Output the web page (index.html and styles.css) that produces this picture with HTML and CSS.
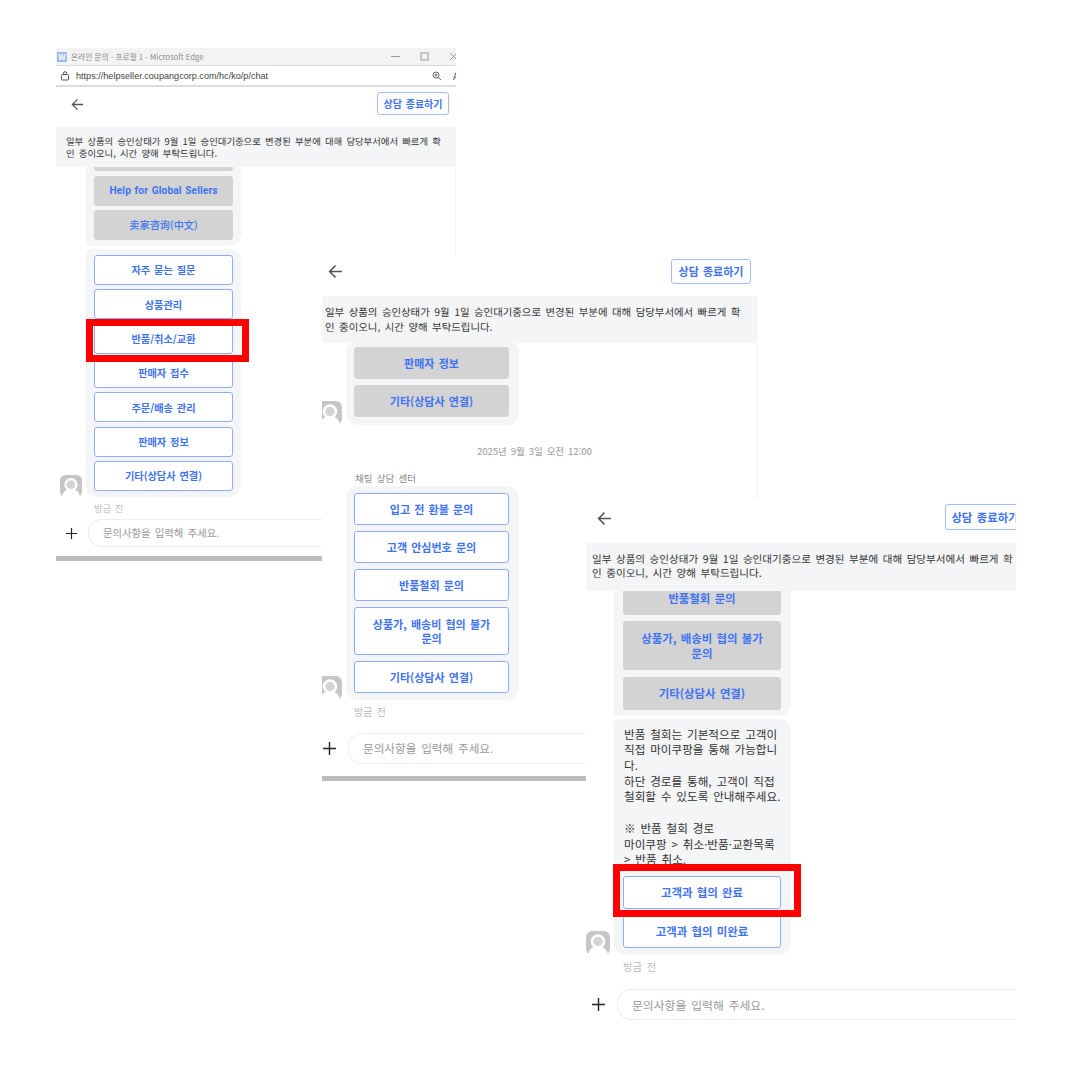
FILE: index.html
```html
<!DOCTYPE html>
<html lang="ko">
<head>
    <meta charset="UTF-8">
    <title>온라인 문의</title>
    <link rel="stylesheet" href="styles.css">
</head>
<body>
    <div class="canvas">

        <!-- First window: main menu -->
        <div class="window window-a">
            <div class="chrome">
                <div class="title-bar">
                    <span class="app-icon">W</span>
                    <span class="title-text">온라인 문의 - 프로필 1 - Microsoft Edge</span>
                    <span class="win-controls">
                        <svg width="9" height="9" viewBox="0 0 9 9"><path d="M0 4.5h9" stroke="#999" fill="none"/></svg>
                        <svg width="9" height="9" viewBox="0 0 9 9"><rect x="1" y="1" width="7" height="7" stroke="#999" fill="none"/></svg>
                        <svg width="9" height="9" viewBox="0 0 9 9"><path d="M1 1l7 7M8 1L1 8" stroke="#999" fill="none"/></svg>
                    </span>
                </div>
                <div class="address-bar">
                    <svg class="lock" width="10" height="10" viewBox="0 0 10 10"><rect x="1.5" y="3.5" width="7" height="5.5" rx="1" stroke="#555" fill="none"/><path d="M3.5 3.5V2.2a1.5 1.5 0 0 1 3 0v1.3" stroke="#555" fill="none"/></svg>
                    <span class="url">https://helpseller.coupangcorp.com/hc/ko/p/chat</span>
                    <svg class="zoom-icon" width="10" height="10" viewBox="0 0 10 10"><circle cx="4" cy="4" r="3" stroke="#666" fill="none"/><path d="M6.2 6.2L9.2 9.2M2.6 4h2.8M4 2.6v2.8" stroke="#666" fill="none"/></svg>
                    <span class="read-icon">A</span>
                </div>
            </div>
            <div class="top-bar">
                <svg class="back" viewBox="0 0 14 14"><path d="M13 7H1.5M7 1.5L1.5 7L7 12.500" stroke="#555" stroke-width="1.4" fill="none"/></svg>
                <button class="end-chat">상담 종료하기</button>
            </div>
            <div class="notice">일부 상품의 승인상태가 9월 1일 승인대기중으로 변경된 부분에 대해 담당부서에서 빠르게 확<br>인 중이오니, 시간 양해 부탁드립니다.</div>
            <div class="chat">
                <div class="bubble">
                    <button class="opt used"></button>
                    <button class="opt used en">Help for Global Sellers</button>
                    <button class="opt used zh">卖家咨询(中文)</button>
                </div>
                <div class="bubble has-avatar">
                    <button class="opt">자주 묻는 질문</button>
                    <button class="opt">상품관리</button>
                    <button class="opt">반품/취소/교환</button>
                    <button class="opt">판매자 접수</button>
                    <button class="opt">주문/배송 관리</button>
                    <button class="opt">판매자 정보</button>
                    <button class="opt">기타(상담사 연결)</button>
                    <svg class="avatar" viewBox="0 0 24 24"><rect width="24" height="24" rx="6" fill="#c6c6c6"/><path d="M2 24c1-5 3-7 6-8h8c3 1 5 3 6 8z" fill="#fff"/><circle cx="12" cy="10.500" r="6" fill="#d4d4d4" stroke="#fff" stroke-width="2.500"/></svg>
                </div>
                <div class="time">방금 전</div>
            </div>
            <div class="composer">
                <svg class="plus" viewBox="0 0 12 12"><path d="M6 0v12M0 6h12" stroke="#222" stroke-width="1.300" fill="none"/></svg>
                <div class="field">문의사항을 입력해 주세요.</div>
            </div>
            <div class="bottom-bar"></div>
            <div class="highlight highlight-a"></div>
        </div>

        <!-- Second window: return submenu -->
        <div class="window window-b">
            <div class="top-bar">
                <svg class="back" viewBox="0 0 14 14"><path d="M13 7H1.5M7 1.5L1.5 7L7 12.500" stroke="#555" stroke-width="1.4" fill="none"/></svg>
                <button class="end-chat">상담 종료하기</button>
            </div>
            <div class="notice">일부 상품의 승인상태가 9월 1일 승인대기중으로 변경된 부분에 대해 담당부서에서 빠르게 확<br>인 중이오니, 시간 양해 부탁드립니다.</div>
            <div class="chat">
                <div class="bubble has-avatar first-reply">
                    <button class="opt used">판매자 정보</button>
                    <button class="opt used">기타(상담사 연결)</button>
                    <svg class="avatar" viewBox="0 0 24 24"><rect width="24" height="24" rx="6" fill="#c6c6c6"/><path d="M2 24c1-5 3-7 6-8h8c3 1 5 3 6 8z" fill="#fff"/><circle cx="12" cy="10.500" r="6" fill="#d4d4d4" stroke="#fff" stroke-width="2.500"/></svg>
                </div>
                <div class="date">2025년 9월 3일 오전 12:00</div>
                <div class="sender">채팅 상담 센터</div>
                <div class="bubble has-avatar">
                    <button class="opt">입고 전 환불 문의</button>
                    <button class="opt">고객 안심번호 문의</button>
                    <button class="opt">반품철회 문의</button>
                    <button class="opt tall">상품가, 배송비 협의 불가<br>문의</button>
                    <button class="opt">기타(상담사 연결)</button>
                    <svg class="avatar" viewBox="0 0 24 24"><rect width="24" height="24" rx="6" fill="#c6c6c6"/><path d="M2 24c1-5 3-7 6-8h8c3 1 5 3 6 8z" fill="#fff"/><circle cx="12" cy="10.500" r="6" fill="#d4d4d4" stroke="#fff" stroke-width="2.500"/></svg>
                </div>
                <div class="time">방금 전</div>
            </div>
            <div class="composer">
                <svg class="plus" viewBox="0 0 12 12"><path d="M6 0v12M0 6h12" stroke="#222" stroke-width="1.300" fill="none"/></svg>
                <div class="field">문의사항을 입력해 주세요.</div>
            </div>
            <div class="bottom-bar"></div>
        </div>

        <!-- Third window: withdrawal answer -->
        <div class="window window-c">
            <div class="top-bar">
                <svg class="back" viewBox="0 0 14 14"><path d="M13 7H1.5M7 1.5L1.5 7L7 12.500" stroke="#555" stroke-width="1.4" fill="none"/></svg>
                <button class="end-chat">상담 종료하기</button>
            </div>
            <div class="notice">일부 상품의 승인상태가 9월 1일 승인대기중으로 변경된 부분에 대해 담당부서에서 빠르게 확<br>인 중이오니, 시간 양해 부탁드립니다.</div>
            <div class="chat">
                <div class="bubble first-reply">
                    <button class="opt used">반품철회 문의</button>
                    <button class="opt used tall">상품가, 배송비 협의 불가<br>문의</button>
                    <button class="opt used">기타(상담사 연결)</button>
                </div>
                <div class="bubble has-avatar">
                    <p class="answer">반품 철회는 기본적으로 고객이<br>직접 마이쿠팡을 통해 가능합니<br>다.<br>하단 경로를 통해, 고객이 직접<br>철회할 수 있도록 안내해주세요.<br><br>※ 반품 철회 경로<br>마이쿠팡 &gt; 취소·반품·교환목록<br>&gt; 반품 취소.</p>
                    <button class="opt">고객과 협의 완료</button>
                    <button class="opt">고객과 협의 미완료</button>
                    <svg class="avatar" viewBox="0 0 24 24"><rect width="24" height="24" rx="6" fill="#c6c6c6"/><path d="M2 24c1-5 3-7 6-8h8c3 1 5 3 6 8z" fill="#fff"/><circle cx="12" cy="10.500" r="6" fill="#d4d4d4" stroke="#fff" stroke-width="2.500"/></svg>
                </div>
                <div class="time">방금 전</div>
            </div>
            <div class="composer">
                <svg class="plus" viewBox="0 0 12 12"><path d="M6 0v12M0 6h12" stroke="#222" stroke-width="1.300" fill="none"/></svg>
                <div class="field">문의사항을 입력해 주세요.</div>
            </div>
            <div class="highlight highlight-c"></div>
        </div>

    </div>
</body>
</html>
```

FILE: styles.css
```css
body {
    margin: 0;
    background-color: #fff;
    font-family: "Noto Sans CJK KR", "Noto Sans", sans-serif;
}

.canvas {
    position: relative;
    width: 1080px;
    height: 1080px;
    overflow: hidden;
    background-color: #fff;
}

/* Screenshots are laid on the canvas like windows on a desktop */
.window {
    position: absolute;
    display: flex;
    flex-direction: column;
    overflow: hidden;
    background-color: #fff;
    word-spacing: 0.1em;
}

.window-a {
    left: 56px;
    top: 48px;
    width: 400px;
    height: 513px;
    --text: 10.200px;
    --notice-text: 9.350px;
    --notice-line: 12.700px;
    --field-text: 10.300px;
    --btn-h: 30px;
    --btn-gap: 4.330px;
    --bubble-w: 155px;
    --bubble-l: 30px;
    --pad-t: 6px;
    --pad-l: 8px;
    --avatar: 22px;
}

.window-b {
    left: 322px;
    top: 255px;
    width: 436px;
    height: 526px;
    --text: 11px;
    --notice-text: 10.420px;
    --notice-line: 15px;
    --field-text: 11.600px;
    --btn-h: 32px;
    --btn-gap: 6px;
    --bubble-w: 173px;
    --bubble-l: 24px;
    --pad-t: 7px;
    --pad-l: 8px;
    --avatar: 24px;
}

.window-c {
    left: 586px;
    top: 500px;
    width: 430px;
    height: 522px;
    --text: 11.400px;
    --notice-text: 10.550px;
    --notice-line: 14.500px;
    --field-text: 11.800px;
    --btn-h: 33px;
    --btn-gap: 6.500px;
    --bubble-w: 177px;
    --bubble-l: 28px;
    --pad-t: 7px;
    --pad-l: 9px;
    --avatar: 24px;
}

/* Browser chrome, first window only */
.chrome {
    flex: none;
    height: 39px;
    border-bottom: 2px solid #dcdcdc;
    box-sizing: border-box;
}

.title-bar {
    display: flex;
    align-items: center;
    height: 17px;
    background-color: #f3f3f3;
    font-size: 7.700px;
    word-spacing: 0;
    color: #8a8a8a;
    padding-left: 1px;
}

.app-icon {
    width: 10px;
    height: 10px;
    margin-right: 4px;
    background-color: #9dbbec;
    color: #fff;
    font-size: 8px;
    font-weight: 700;
    line-height: 10px;
    text-align: center;
}

.win-controls {
    display: flex;
    gap: 20px;
    margin-left: auto;
    margin-right: -2px;
}

.address-bar {
    display: flex;
    align-items: center;
    height: 20px;
    border-top: 1px solid #d8d8d8;
    box-sizing: border-box;
    padding-left: 4px;
    font-size: 9.100px;
    word-spacing: 0;
    color: #444;
}

.lock {
    margin-right: 6px;
}

.url {
    font-family: "Liberation Sans", sans-serif;
}

.zoom-icon {
    margin-left: auto;
    margin-right: 11px;
}

.read-icon {
    width: 3px;
    overflow: hidden;
}

/* Header and notice */
.top-bar {
    flex: none;
    display: flex;
    align-items: center;
    justify-content: space-between;
    height: 40px;
    box-sizing: border-box;
    padding: 0 7px 5px 15px;
}

.window-b .top-bar {
    height: 41px;
    padding: 0 7px 9px 6px;
}

.window-c .top-bar {
    height: 43px;
    padding: 0 0 7px 11px;
}

.back {
    width: 13px;
    height: 13px;
}

.window-b .back,
.window-c .back {
    width: 15px;
    height: 15px;
}

.end-chat {
    height: 23px;
    width: 72px;
    margin-bottom: 3px;
    padding: 0;
    background: #fff;
    border: 1px solid #a3bcfb;
    border-radius: 3px;
    color: #3f73f4;
    font: 700 10px "Noto Sans CJK KR", sans-serif;
    word-spacing: 0.1em;
    white-space: nowrap;
}

.window-b .end-chat {
    width: 80px;
    height: 25px;
    margin-bottom: 0;
    font-size: 11px;
}

.window-c .end-chat {
    width: 80px;
    height: 26px;
    margin-right: -9px;
    margin-bottom: 3px;
    font-size: 11.400px;
}

.notice {
    flex: none;
    position: relative;
    z-index: 1;
    padding: 7.500px 10px;
    background-color: #f4f5f7;
    color: #333;
    font-size: var(--notice-text);
    line-height: var(--notice-line);
    text-rendering: geometricPrecision;
    white-space: nowrap;
}

.window-b .notice {
    padding: 8.500px 3px;
}

.window-c .notice {
    padding: 9.500px 6px;
}

/* Chat stream, pinned to the bottom so older messages clip at the top */
.chat {
    flex: 1;
    min-height: 0;
    display: flex;
    flex-direction: column;
    justify-content: flex-end;
    padding-left: var(--bubble-l);
}

.window-a .chat,
.window-b .chat {
    border-right: 1px solid #f2f2f2;
}

.bubble {
    flex: none;
    position: relative;
    display: flex;
    flex-direction: column;
    gap: var(--btn-gap);
    box-sizing: border-box;
    width: var(--bubble-w);
    margin-top: 3px;
    padding: var(--pad-t) 0 var(--pad-t) var(--pad-l);
    background-color: #f4f5f7;
    border-radius: 0 12px 12px 0;
}

.bubble.has-avatar {
    border-radius: 4px 12px 12px 12px;
}

.window-b .bubble {
    border-radius: 12px;
}

.window-b .first-reply {
    padding-bottom: 8px;
}

.window-c .first-reply {
    padding-bottom: 6px;
}

.opt {
    flex: none;
    height: var(--btn-h);
    width: calc(var(--bubble-w) - var(--pad-l) - 8px);
    padding: 0;
    background-color: #fff;
    border: 1px solid #8fadff;
    border-radius: 3px;
    color: #3f73f4;
    font: 700 var(--text)/1.300 "Noto Sans CJK KR", sans-serif;
    word-spacing: 0.1em;
}

.window-b .opt,
.window-c .opt {
    width: calc(var(--bubble-w) - var(--pad-l) - 10px);
}

.opt.tall {
    height: 48px;
}

.window-c .opt.tall {
    height: 49px;
}

.opt.used {
    background-color: #d3d3d3;
    border-color: #d3d3d3;
}

.opt.en {
    font-family: Roboto, sans-serif;
    letter-spacing: 0.1px;
}

.opt.zh {
    font-family: "Noto Sans CJK SC", sans-serif;
    font-weight: 500;
}

.avatar {
    position: absolute;
    left: calc(-4px - var(--avatar));
    bottom: 0;
    width: var(--avatar);
    height: var(--avatar);
}

.time {
    flex: none;
    margin-top: 5px;
    padding-left: var(--pad-l);
    color: #bbb;
    font-size: calc(var(--text) - 1px);
    line-height: 13px;
}

.date {
    flex: none;
    margin: 19px 0 12px;
    padding-left: 131px;
    color: #aaa;
    font-size: 9.500px;
    font-weight: 500;
    letter-spacing: -0.15px;
    line-height: 15px;
    white-space: nowrap;
}

.sender {
    flex: none;
    margin-bottom: -2px;
    padding-left: 9px;
    color: #888;
    font-size: 9.500px;
    line-height: 14px;
}

.answer {
    margin: 1px 0 1px 1px;
    color: #333;
    font-size: 11.600px;
    line-height: 15.700px;
    white-space: nowrap;
}

/* Input row */
.composer {
    flex: none;
    display: flex;
    align-items: center;
    gap: 11px;
    height: 36px;
    padding: 0 0 0 10px;
}

.window-b .composer,
.window-c .composer {
    gap: 12px;
    box-sizing: border-box;
}

.window-b .composer {
    height: 54px;
    padding: 7px 0 0 1px;
}

.window-c .composer {
    height: 49px;
    padding: 13px 0 0 6px;
}

.plus {
    flex: none;
    width: 11px;
    height: 11px;
}

.window-b .plus,
.window-c .plus {
    width: 13px;
    height: 13px;
}

.field {
    flex: 1;
    height: 26px;
    padding-left: 14px;
    border: 1px solid #eee;
    border-right: none;
    border-radius: 14px 0 0 14px;
    color: #999;
    font-size: var(--field-text);
    line-height: 26px;
    white-space: nowrap;
}

.window-b .field,
.window-c .field {
    height: 29px;
    line-height: 29px;
}

.bottom-bar {
    flex: none;
    height: 5px;
    margin-top: 4px;
    background-color: #bcbcbc;
}

.window-a .bottom-bar {
    margin-top: 5px;
}

/* Red annotation boxes */
.highlight {
    position: absolute;
    z-index: 2;
    box-sizing: border-box;
    border: 7px solid #ff0000;
}

.highlight-a {
    left: 30px;
    top: 271px;
    width: 163px;
    height: 43px;
}

.highlight-c {
    left: 27px;
    top: 364px;
    width: 188px;
    height: 53px;
}
```
